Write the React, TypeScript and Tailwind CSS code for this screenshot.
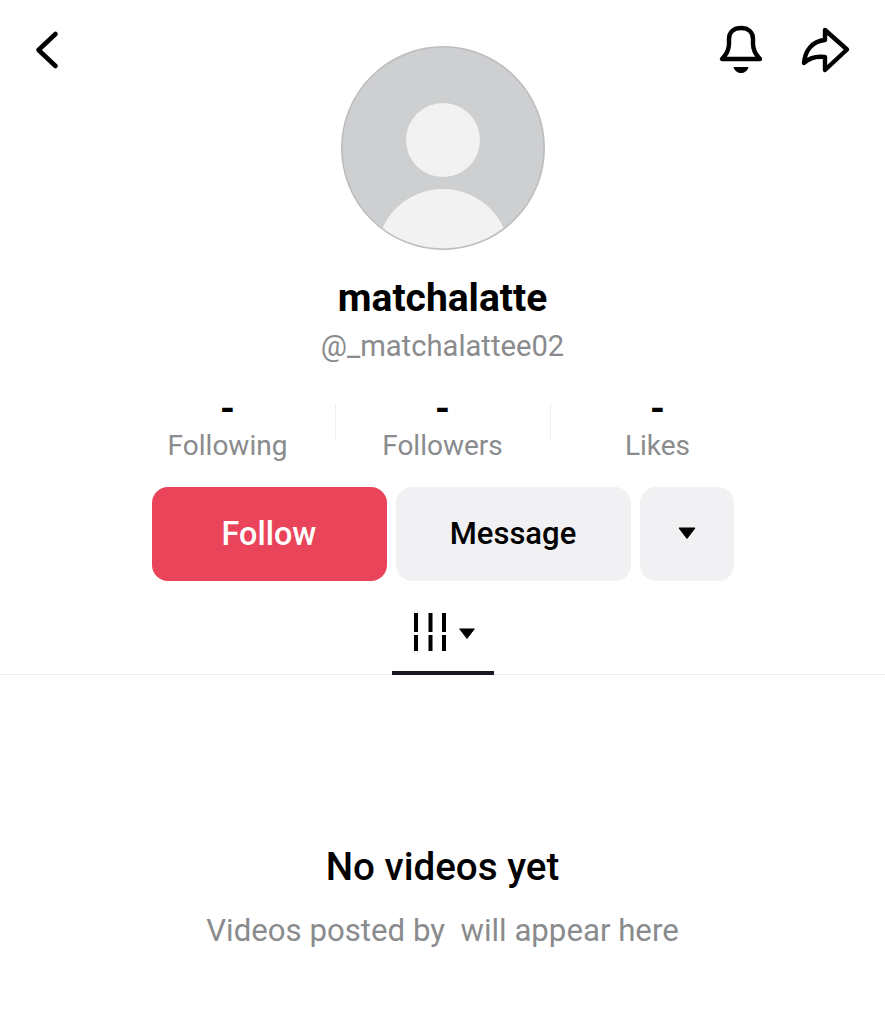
import React from "react";

function Stat({ label }: { label: string }) {
  return (
    <div className="flex w-[214px] flex-col items-center">
      <span className="-mt-[13px] h-[36px] text-[38px] leading-[36px] font-bold text-black">-</span>
      <span className="mt-[1px] text-[28px] leading-[36px] text-[#8a8b8d]">{label}</span>
    </div>
  );
}

function Divider() {
  return <div className="h-[35px] w-px bg-[#eeeeef]" />;
}

function Caret({ className }: { className: string }) {
  return (
    <svg viewBox="0 0 18 12" className={className} fill="currentColor">
      <path d="M1 1 H17 L9 11.5 Z" stroke="currentColor" strokeWidth="1" strokeLinejoin="round" />
    </svg>
  );
}

export default function App() {
  return (
    <div className="flex h-[1024px] w-[885px] flex-col items-center overflow-hidden bg-white font-['Roboto',sans-serif]">
      <div className="grid w-full grid-cols-[341px_204px_1fr] items-start">
        <svg viewBox="32 28 32 44" className="mt-[28px] ml-[32px] h-[44px] w-[32px]" fill="none" stroke="#000" strokeWidth="4.6" strokeLinecap="round" strokeLinejoin="round">
          <path d="M55.5 34 L38.5 50 L55.5 66" />
        </svg>
        <svg viewBox="341 46 204 204" className="mt-[46px] h-[204px] w-[204px]">
          <defs>
            <clipPath id="av">
              <circle cx="443" cy="148" r="101" />
            </clipPath>
          </defs>
          <circle cx="443" cy="148" r="101.2" fill="#cdcfd1" />
          <circle cx="443" cy="140" r="37" fill="#f2f2f2" />
          <ellipse cx="443" cy="254" rx="66" ry="65" fill="#f2f2f2" clipPath="url(#av)" />
          <circle cx="443" cy="148" r="101.2" fill="none" stroke="#bcbdbf" strokeWidth="1.6" />
        </svg>
        <div className="flex justify-end gap-[36px] pr-[34px]">
          <svg viewBox="717 24 48 52" className="mt-[24px] h-[52px] w-[48px]" fill="none" stroke="#000" strokeWidth="4.4" strokeLinejoin="round">
            <path d="M722 59 H760 C756 55 753 50 753 44 V39 C753 32 748 28 741 28 C734 28 729 32 729 39 V44 C729 50 726 55 722 59 Z" />
            <path d="M733.5 67 H748.5 C747.5 71 744 73 741 73 C738 73 734.5 71 733.5 67 Z" fill="#000" stroke="none" />
          </svg>
          <svg viewBox="801 26 50 48" className="mt-[26px] h-[48px] w-[50px]" fill="none" stroke="#000" strokeWidth="4.4" strokeLinejoin="round">
            <path d="M825 30 L847 49.5 L825 70 V57 C816 56 809 58 804 63 C805 51 812 41 825 40 Z" />
          </svg>
        </div>
      </div>

      <h1 className="mt-[26px] text-[39px] leading-[44px] font-bold text-black">matchalatte</h1>
      <p className="mt-[8px] text-[29.2px] leading-[36px] text-[#8a8b8d]">@_matchalattee02</p>

      <div className="mt-[40px] flex items-start">
        <Stat label="Following" />
        <Divider />
        <Stat label="Followers" />
        <Divider />
        <Stat label="Likes" />
      </div>

      <div className="mt-[23px] flex gap-[9px]">
        <button className="flex h-[94px] w-[235px] items-center justify-center rounded-[16px] bg-[#ea445a] pt-[1px] text-[32.4px] font-medium text-white">Follow</button>
        <button className="flex h-[94px] w-[235px] items-center justify-center rounded-[16px] bg-[#f1f1f3] text-[31px] font-medium text-black">Message</button>
        <button className="flex h-[94px] w-[94px] items-center justify-center rounded-[16px] bg-[#f1f1f3] pb-[2px] text-black">
          <Caret className="h-[12px] w-[18px]" />
        </button>
      </div>

      <div className="mt-[30px] flex h-[64px] w-full justify-center border-b border-[#ededed]">
        <div className="flex h-[64px] w-[102px] justify-center gap-[9px] border-b-4 border-[#161823] pl-[3px] text-black">
          <svg viewBox="0 0 36 40" className="h-[40px] w-[36px]" fill="none" stroke="#000" strokeWidth="4">
            <path d="M3 2 V21 M3 24 V40 M17.5 2 V21 M17.5 24 V40 M31 2 V21 M31 24 V40" />
          </svg>
          <Caret className="mt-[17px] h-[11px] w-[18px]" />
        </div>
      </div>

      <h2 className="mt-[170px] text-[38.6px] leading-[44px] font-medium text-black">No videos yet</h2>
      <p className="mt-[22px] text-[31.2px] leading-[40px] whitespace-pre text-[#8a8b8d]">Videos posted by  will appear here</p>
    </div>
  );
}
